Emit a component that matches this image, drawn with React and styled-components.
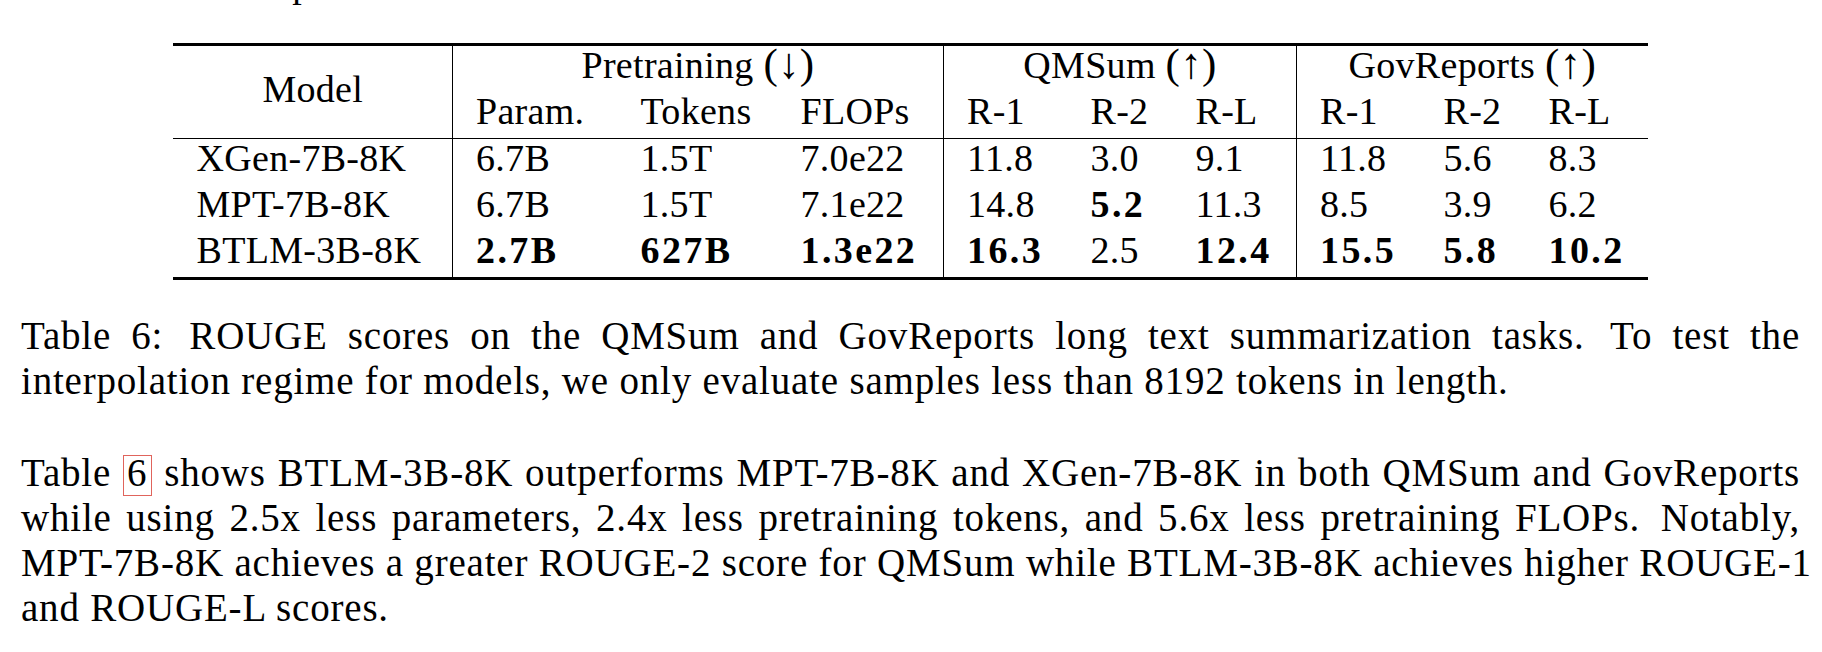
import React from "react";
import styled, { createGlobalStyle } from "styled-components";

const GlobalStyle = createGlobalStyle`
  html, body {
    margin: 0;
    padding: 0;
    background: #fff;
    overflow: hidden;
  }
  body {
    font-family: "Liberation Serif", "Times New Roman", serif;
    color: #000;
  }
`;

// page column, same width as the text block of the paper
const Page = styled.div`
  width: 1779px;
  padding: 0 22px 0 21px;
  font-size: 38px;
`;

// line of the previous paragraph, cut off by the top of the window
const Lead = styled.div`
  margin-top: -38px;
  line-height: 45px;
  height: 45px;
  white-space: nowrap;
`;

const Table = styled.table`
  margin: 36px auto 0;
  width: 1474px;
  table-layout: fixed;
  border-collapse: collapse;
  border-top: 3px solid #000;
  border-bottom: 3px solid #000;
  font-size: 38px;
  letter-spacing: 0.3px;
`;

const Col = styled.col`
  width: ${(p) => p.$w}px;
`;

const Head = styled.thead`
  border-bottom: 1px solid #000;
`;

const Cell = styled.td`
  padding: ${(p) => (p.$span ? "0 0 6px 0" : p.$center ? "0 23px 8px" : "0 0 8px 23px")};
  line-height: 38px;
  white-space: nowrap;
  text-align: ${(p) => (p.$center ? "center" : "left")};
  vertical-align: ${(p) => (p.$span ? "middle" : "top")};
  font-weight: ${(p) => (p.$bold ? 700 : 400)};
  letter-spacing: ${(p) => (p.$bold ? "2.4px" : "inherit")};
  border-right: ${(p) => (p.$rule ? "1px solid #000" : "none")};
`;

// the arrow in the group headers, set larger like a math arrow
const Dir = styled.span`
  font-size: 43px;
  line-height: 0;
`;

const Caption = styled.div`
  margin-top: 33px;
`;

const Paragraph = styled.div`
  margin-top: 47px;
`;

const Line = styled.div`
  font-size: 39px;
  letter-spacing: 0.8px;
  line-height: 45px;
  height: 45px;
  white-space: nowrap;
  text-align: ${(p) => (p.$last ? "left" : "justify")};
  text-align-last: ${(p) => (p.$last ? "left" : "justify")};
`;

// extra sentence space as LaTeX sets it
const Gap = styled.span`
  display: inline-block;
  width: 6px;
`;

const Ref = styled.span`
  display: inline-block;
  height: 39px;
  line-height: 34px;
  padding: 0 4px 0 3px;
  border: 1px solid #e0645c;
`;

const widths = [279, 165, 160, 166, 124, 105, 124, 124, 105, 122];
const ruleAfter = [0, 3, 6];

const rows = [
  ["XGen-7B-8K", "6.7B", "1.5T", "7.0e22", "11.8", "3.0", "9.1", "11.8", "5.6", "8.3"],
  ["MPT-7B-8K", "6.7B", "1.5T", "7.1e22", "14.8", "*5.2", "11.3", "8.5", "3.9", "6.2"],
  ["BTLM-3B-8K", "*2.7B", "*627B", "*1.3e22", "*16.3", "2.5", "*12.4", "*15.5", "*5.8", "*10.2"],
];

const subHeads = ["Param.", "Tokens", "FLOPs", "R-1", "R-2", "R-L", "R-1", "R-2", "R-L"];

export default function App() {
  return (
    <>
      <GlobalStyle />
      <Page>
        <Lead>The models were presented</Lead>
        <Table>
          <colgroup>
            {widths.map((w, i) => (
              <Col key={i} $w={w} />
            ))}
          </colgroup>
          <Head>
            <tr>
              <Cell rowSpan={2} $span $center $rule>
                Model
              </Cell>
              <Cell colSpan={3} $center $rule>
                Pretraining <Dir>(↓)</Dir>
              </Cell>
              <Cell colSpan={3} $center $rule>
                QMSum <Dir>(↑)</Dir>
              </Cell>
              <Cell colSpan={3} $center>
                GovReports <Dir>(↑)</Dir>
              </Cell>
            </tr>
            <tr>
              {subHeads.map((h, i) => (
                <Cell key={i} $rule={ruleAfter.includes(i + 1)}>
                  {h}
                </Cell>
              ))}
            </tr>
          </Head>
          <tbody>
            {rows.map((row, r) => (
              <tr key={r}>
                {row.map((v, i) => {
                  const bold = v.startsWith("*");
                  return (
                    <Cell key={i} $bold={bold} $rule={ruleAfter.includes(i)}>
                      {bold ? v.slice(1) : v}
                    </Cell>
                  );
                })}
              </tr>
            ))}
          </tbody>
        </Table>
        <Caption>
          <Line>
            Table 6:<Gap /> ROUGE scores on the QMSum and GovReports long text summarization tasks.<Gap /> To test the
          </Line>
          <Line $last>
            interpolation regime for models, we only evaluate samples less than 8192 tokens in length.
          </Line>
        </Caption>
        <Paragraph>
          <Line>
            Table <Ref>6</Ref> shows BTLM-3B-8K outperforms MPT-7B-8K and XGen-7B-8K in both QMSum and GovReports
          </Line>
          <Line>
            while using 2.5x less parameters, 2.4x less pretraining tokens, and 5.6x less pretraining FLOPs.<Gap /> Notably,
          </Line>
          <Line>
            MPT-7B-8K achieves a greater ROUGE-2 score for QMSum while BTLM-3B-8K achieves higher ROUGE-1
          </Line>
          <Line $last>and ROUGE-L scores.</Line>
        </Paragraph>
      </Page>
    </>
  );
}
